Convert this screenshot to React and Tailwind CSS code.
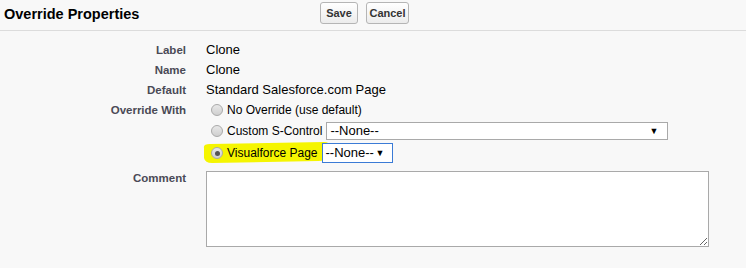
export default function App() {
  const label = 'text-right text-[11.5px] font-bold text-[#4a4a56] leading-[20px]';
  const value = 'text-[13px] text-black leading-[20px]';
  const opt = 'text-[12px] text-black leading-[20px]';

  const Radio = ({ checked }) => (
    <span className="w-[12px] h-[12px] rounded-full border border-[#a9a9a9] bg-gradient-to-b from-[#e8e8e8] to-[#cfcfcf] flex items-center justify-center shrink-0">
      {checked && <span className="w-[5px] h-[5px] rounded-full bg-[#555]" />}
    </span>
  );

  return (
    <div className="w-[746px] h-[268px] bg-[#f8f8f8] font-['Liberation_Sans',Arial,sans-serif] overflow-hidden">
      {/* Header */}
      <div className="flex items-center h-[31px] border-b border-[#dcdcdc]">
        <div className="w-[320px] pl-[4px] text-[14.5px] font-bold text-black">Override Properties</div>
        <div className="flex gap-[8px] -mt-[4px]">
          <button className="h-[22px] w-[38px] text-[11px] font-bold text-[#333] rounded-[3px] border border-[#b5b5b5] bg-gradient-to-b from-white to-[#ececec]">Save</button>
          <button className="h-[22px] w-[43px] text-[11px] font-bold text-[#333] rounded-[3px] border border-[#b5b5b5] bg-gradient-to-b from-white to-[#ececec]">Cancel</button>
        </div>
      </div>

      {/* Body */}
      <div className="grid grid-cols-[186px_1fr] gap-x-[20px] pt-[9px]">
        <div className={label}>Label</div>
        <div className={value}>Clone</div>
        <div className={label}>Name</div>
        <div className={value}>Clone</div>
        <div className={label}>Default</div>
        <div className={value}>Standard Salesforce.com Page</div>

        <div className={label}>Override With</div>
        <div className="flex flex-col">
          <div className={`flex items-center gap-[4px] pl-[5px] h-[20px] ${opt}`}>
            <Radio />
            <span>No Override (use default)</span>
          </div>
          <div className={`flex items-center gap-[4px] pl-[5px] h-[22px] ${opt}`}>
            <Radio />
            <span>Custom S-Control</span>
            <div className="w-[342px] h-[18px] bg-white border border-[#a9a9a9] flex items-center justify-between px-[3px] text-[13px]">
              <span>--None--</span>
              <span className="text-[9px] mr-[6px]">▼</span>
            </div>
          </div>
          <div className={`relative flex items-center gap-[4px] pl-[5px] h-[22px] ${opt}`}>
            <svg className="absolute left-[-4px] top-[0px]" width="130" height="22" viewBox="0 0 130 22">
              <path d="M2 6 Q1 2 8 2 L122 0 Q128 0 128 5 L128 16 Q124 19 116 19 L10 21 Q3 21 2 16 Z" fill="#f5f500" />
            </svg>
            <span className="relative"><Radio checked /></span>
            <span className="relative">Visualforce Page</span>
            <div className="relative w-[71px] h-[20px] bg-white border border-[#3b7bd6] flex items-center justify-between px-[3px] text-[13px]">
              <span>--None--</span>
              <span className="text-[9px] mr-[4px]">▼</span>
            </div>
          </div>
        </div>

        <div className={label + ' mt-[4px]'}>Comment</div>
        <div className="mt-[7px]">
          <textarea className="block w-[503px] h-[76px] bg-white border border-[#a9a9a9]" />
        </div>
      </div>
    </div>
  );
}
